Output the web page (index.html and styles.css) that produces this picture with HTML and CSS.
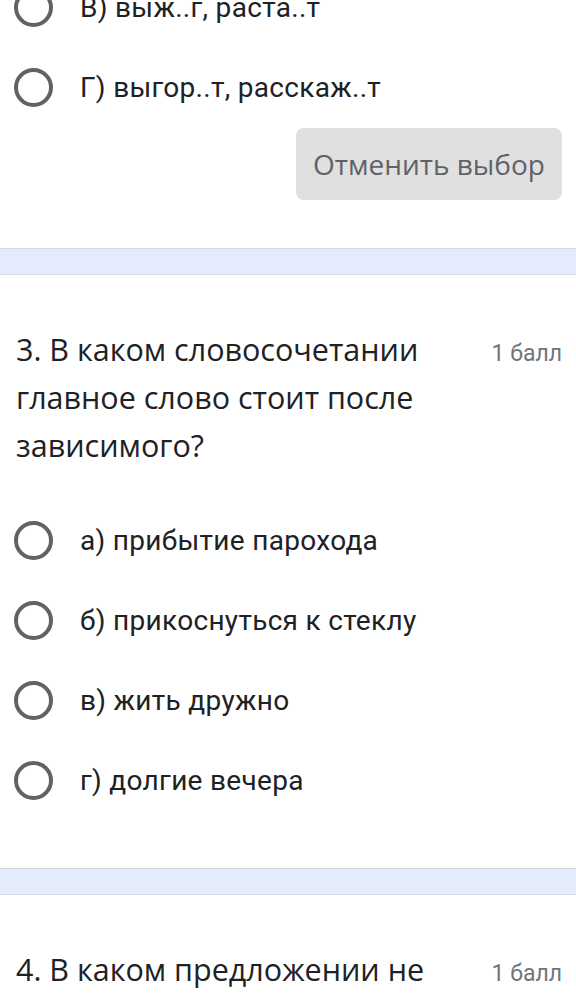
FILE: index.html
```html
<!DOCTYPE html>
<html lang="ru">

<head>
  <meta charset="UTF-8" />
  <meta name="viewport" content="width=device-width, initial-scale=1.0" />
  <title>Тест</title>
  <link rel="stylesheet" href="styles.css">
</head>

<body>
  <div class="card card-first">
    <div class="options">
      <label class="option"><span class="radio"></span><span class="option-text">В) выж..г, раста..т</span></label>
      <label class="option"><span class="radio"></span><span class="option-text">Г) выгор..т, расскаж..т</span></label>
    </div>
    <div class="clear-row">
      <button class="clear-button">Отменить выбор</button>
    </div>
  </div>

  <div class="divider"></div>

  <div class="card">
    <div class="question-head">
      <div class="question-title">3. В каком словосочетании главное слово стоит после зависимого?</div>
      <div class="points">1 балл</div>
    </div>
    <div class="options options-spaced">
      <label class="option"><span class="radio"></span><span class="option-text">а) прибытие парохода</span></label>
      <label class="option"><span class="radio"></span><span class="option-text">б) прикоснуться к стеклу</span></label>
      <label class="option"><span class="radio"></span><span class="option-text">в) жить дружно</span></label>
      <label class="option"><span class="radio"></span><span class="option-text">г) долгие вечера</span></label>
    </div>
  </div>

  <div class="divider"></div>

  <div class="card">
    <div class="question-head">
      <div class="question-title">4. В каком предложении не пишется слитно?</div>
      <div class="points">1 балл</div>
    </div>
  </div>
</body>

</html>
```

FILE: styles.css
```css
body {
  margin: 0;
  background: #ffffff;
  color: #202124;
  font-family: Roboto, "Noto Sans", sans-serif;
  overflow: hidden;
}

.card {
  padding: 50px 14px 48px 16px;
}

.card-first {
  margin-top: -33px;
  padding-top: 0;
}

.options {
  display: flex;
  flex-direction: column;
}

.options-spaced {
  margin-top: 31px;
}

.option {
  display: flex;
  align-items: center;
  height: 80px;
  margin-left: -2px;
}

.radio {
  box-sizing: border-box;
  width: 39px;
  height: 39px;
  border: 4px solid #5f6368;
  border-radius: 50%;
  flex: 0 0 auto;
}

.option-text {
  margin-left: 27px;
  font-size: 28px;
  letter-spacing: 0.3px;
  color: #202124;
}

.clear-row {
  display: flex;
  justify-content: flex-end;
  margin-top: 1px;
}

.clear-button {
  width: 266px;
  height: 72px;
  border: none;
  border-radius: 8px;
  background: #e0e0e0;
  color: #5f6368;
  font-family: "Open Sans", Roboto, sans-serif;
  font-size: 28px;
  font-weight: 500;
  padding: 0;
}

.divider {
  height: 25px;
  background: #e3ebfc;
  border-top: 1px solid #d6dbe2;
  border-bottom: 1px solid #d6dbe2;
}

.question-head {
  display: flex;
  align-items: baseline;
}

.question-title {
  flex: 1;
  font-family: "Open Sans", Roboto, sans-serif;
  font-size: 30.5px;
  line-height: 48px;
  color: #202124;
}

.points {
  margin-left: 16px;
  font-size: 23px;
  color: #70757a;
  white-space: nowrap;
}
```
